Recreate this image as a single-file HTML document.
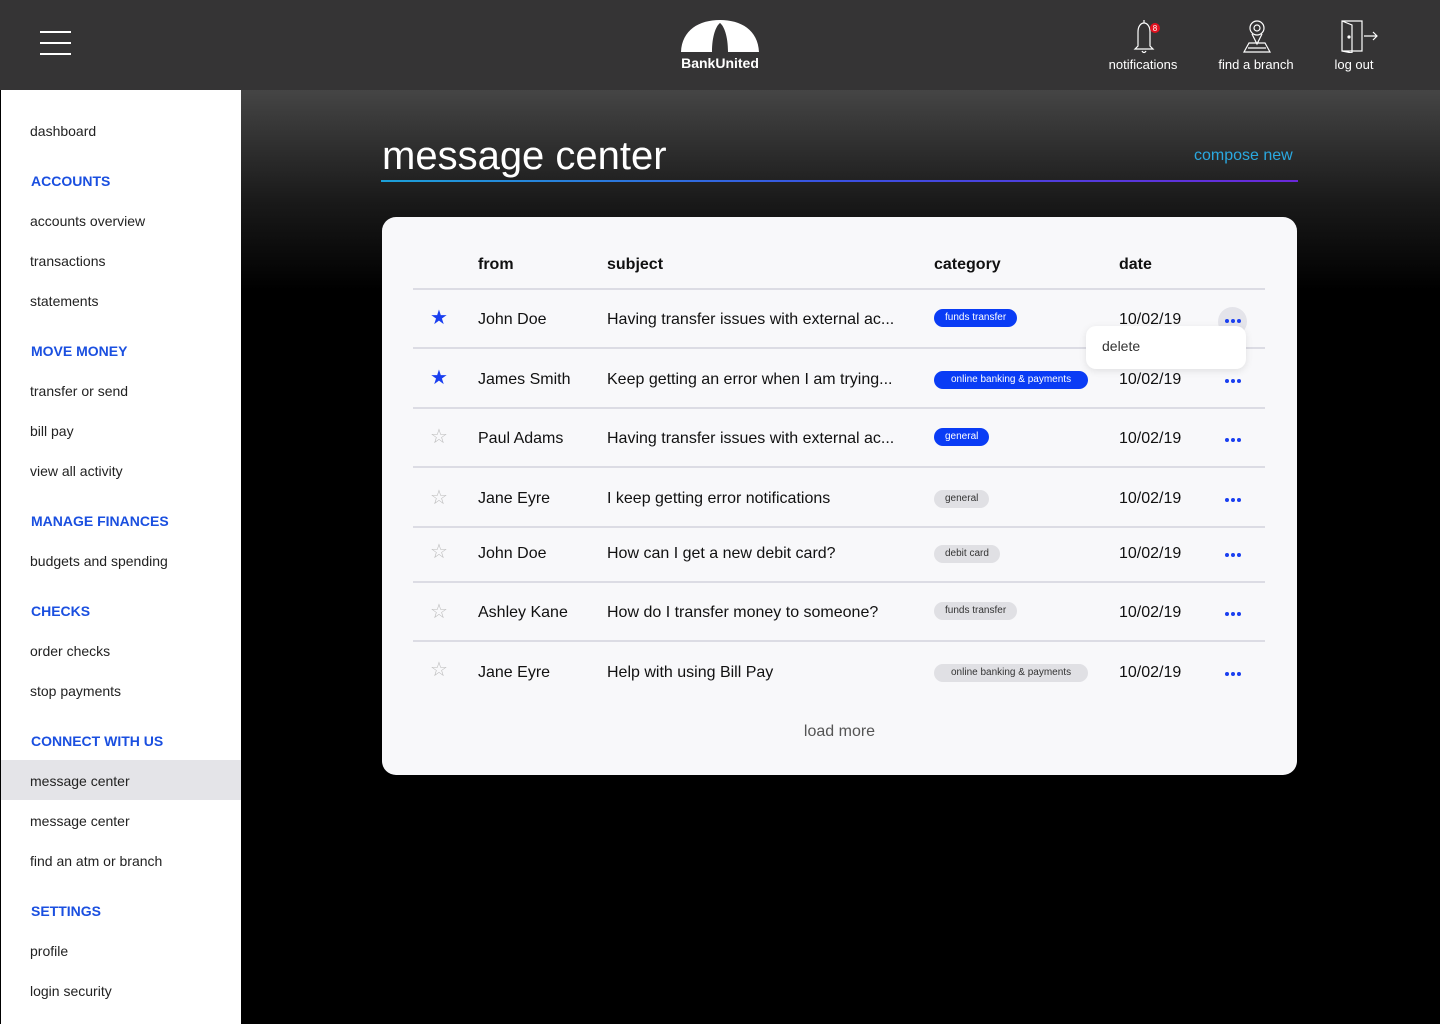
<!DOCTYPE html><html><head><style>
*{margin:0;padding:0;box-sizing:border-box}
body{width:1440px;height:1024px;overflow:hidden;font-family:"Liberation Sans",sans-serif;background:#000;position:relative}
.top{position:absolute;left:0;top:0;width:1440px;height:90px;background:#353435}
.main{position:absolute;left:241px;top:90px;width:1199px;height:934px;background:linear-gradient(#454545 0,#1a1a1a 110px,#000 200px)}
.side{position:absolute;left:1px;top:90px;width:240px;height:934px;background:#fff}
.side div{position:absolute;left:29px;font-size:14px;color:#222;line-height:20px}
.side .h{color:#1a4fe0;font-weight:bold;left:30px;font-size:14px}
.side .act{left:0;top:670px;width:240px;height:40px;background:#e4e4e8}
.t{position:absolute;color:#fff;font-size:13px;text-align:center}
.card{position:absolute;left:382px;top:217px;width:915px;height:558px;background:#f8f8fa;border-radius:14px}
.ln{position:absolute;left:31px;width:852px;height:2px;background:#dcdce4}
.c{position:absolute;font-size:16px;color:#111;line-height:20px}
.pill{position:absolute;left:552px;height:18px;border-radius:9px;font-size:10px;line-height:18px;padding:0 11px;color:#fff;background:#0a3cf5}
.pill.g{background:#e0e0e4;color:#333}
.dots{position:absolute;left:842px;width:18px;height:6px}
.star{position:absolute;left:48px;font-size:20px;line-height:20px}
</style></head><body>
<div class="top"></div>
<div style="position:absolute;left:40px;top:31px;width:31px;height:2px;background:#fff"></div>
<div style="position:absolute;left:40px;top:42px;width:31px;height:2px;background:#fff"></div>
<div style="position:absolute;left:40px;top:53px;width:31px;height:2px;background:#fff"></div>
<svg style="position:absolute;left:681px;top:20px" width="78" height="32" viewBox="0 0 78 32"><path fill-rule="evenodd" d="M0 32 C1 10 18 0 39 0 C60 0 77 10 78 32 Z M31 32 C31 16 35 6 39 3 C43 6 47 16 47 32 Z" fill="#fff"/></svg>
<div class="t" style="left:670px;top:55px;width:100px;font-weight:bold;font-size:14px">BankUnited</div>
<svg style="position:absolute;left:1128px;top:18px" width="34" height="36" viewBox="0 0 34 36" fill="none" stroke="#fff" stroke-width="1.2"><path d="M10 28 L10 14 C10 8 13 5 16 5 C19 5 22 8 22 14 L22 28 L25 31 L7 31 Z M14 33 C15 35 17 35 18 33 M16 5 L16 2"/><circle cx="27" cy="10" r="5" fill="#e0101e" stroke="none"/><text x="27" y="13" font-size="8" fill="#fff" stroke="none" text-anchor="middle" font-family="Liberation Sans">8</text></svg>
<div class="t" style="left:1098px;top:57px;width:90px">notifications</div>
<svg style="position:absolute;left:1240px;top:19px" width="34" height="34" viewBox="0 0 34 34" fill="none" stroke="#fff" stroke-width="1.2"><circle cx="17" cy="9" r="7"/><circle cx="17" cy="9" r="3"/><path d="M12 15 L17 25 L22 15 M4 33 L9 24 L25 24 L30 33 Z M8 29 L26 29"/></svg>
<div class="t" style="left:1211px;top:57px;width:90px">find a branch</div>
<svg style="position:absolute;left:1340px;top:19px" width="40" height="34" viewBox="0 0 40 34" fill="none" stroke="#fff" stroke-width="1.2"><path d="M2 2 L22 2 L22 32 L2 32 Z M2 2 L12 6 L12 34 L2 32 M24 17 L37 17 M33 13 L37 17 L33 21"/><circle cx="9" cy="18" r="1" fill="#fff"/></svg>
<div class="t" style="left:1314px;top:57px;width:80px">log out</div>
<div class="main"></div>
<div class="side"><div class="act"></div>
<div style="top:31px">dashboard</div><div class="h" style="top:81px">ACCOUNTS</div>
<div style="top:121px">accounts overview</div><div style="top:161px">transactions</div><div style="top:201px">statements</div>
<div class="h" style="top:251px">MOVE MONEY</div><div style="top:291px">transfer or send</div><div style="top:331px">bill pay</div><div style="top:371px">view all activity</div>
<div class="h" style="top:421px">MANAGE FINANCES</div><div style="top:461px">budgets and spending</div>
<div class="h" style="top:511px">CHECKS</div><div style="top:551px">order checks</div><div style="top:591px">stop payments</div>
<div class="h" style="top:641px">CONNECT WITH US</div><div style="top:681px">message center</div><div style="top:721px">message center</div><div style="top:761px">find an atm or branch</div>
<div class="h" style="top:811px">SETTINGS</div><div style="top:851px">profile</div><div style="top:891px">login security</div></div>
<div style="position:absolute;left:382px;top:132px;color:#fff;font-size:40px;line-height:48px">message center</div>
<div style="position:absolute;left:1194px;top:147px;color:#2aa8e0;font-size:16px">compose new</div>
<div style="position:absolute;left:381px;top:180px;width:917px;height:2px;background:linear-gradient(90deg,#1ca0d8,#3a50e0,#6a28d8)"></div>
<div class="card">
<div class="c" style="left:96px;top:38px;font-weight:bold">from</div><div class="c" style="left:225px;top:38px;font-weight:bold">subject</div><div class="c" style="left:552px;top:38px;font-weight:bold">category</div><div class="c" style="left:737px;top:38px;font-weight:bold">date</div>
<div class="ln" style="top:71px"></div>
<div class="star" style="top:91px;color:#1a3ff0">★</div><div class="c" style="left:96px;top:93px">John Doe</div><div class="c" style="left:225px;top:93px">Having transfer issues with external ac...</div><div class="pill" style="top:92px">funds transfer</div><div class="c" style="left:737px;top:93px">10/02/19</div>
<div style="position:absolute;left:836px;top:90px;width:29px;height:29px;border-radius:50%;background:#e4e4ea"></div>
<svg class="dots" style="top:101px" viewBox="0 0 18 6"><g fill="#1a3ff0"><circle cx="3" cy="3" r="2"/><circle cx="9" cy="3" r="2"/><circle cx="15" cy="3" r="2"/></g></svg>
<div class="ln" style="top:130px"></div>
<div class="star" style="top:151px;color:#1a3ff0">★</div><div class="c" style="left:96px;top:153px">James Smith</div><div class="c" style="left:225px;top:153px">Keep getting an error when I am trying...</div><div class="pill" style="top:154px;padding:0 17px">online banking &amp; payments</div><div class="c" style="left:737px;top:153px">10/02/19</div>
<svg class="dots" style="top:161px" viewBox="0 0 18 6"><g fill="#1a3ff0"><circle cx="3" cy="3" r="2"/><circle cx="9" cy="3" r="2"/><circle cx="15" cy="3" r="2"/></g></svg>
<div class="ln" style="top:190px"></div>
<div class="star" style="top:210px;color:#bbb">☆</div><div class="c" style="left:96px;top:212px">Paul Adams</div><div class="c" style="left:225px;top:212px">Having transfer issues with external ac...</div><div class="pill" style="top:211px">general</div><div class="c" style="left:737px;top:212px">10/02/19</div>
<svg class="dots" style="top:220px" viewBox="0 0 18 6"><g fill="#1a3ff0"><circle cx="3" cy="3" r="2"/><circle cx="9" cy="3" r="2"/><circle cx="15" cy="3" r="2"/></g></svg>
<div class="ln" style="top:249px"></div>
<div class="star" style="top:271px;color:#bbb">☆</div><div class="c" style="left:96px;top:272px">Jane Eyre</div><div class="c" style="left:225px;top:272px">I keep getting error notifications</div><div class="pill g" style="top:273px">general</div><div class="c" style="left:737px;top:272px">10/02/19</div>
<svg class="dots" style="top:280px" viewBox="0 0 18 6"><g fill="#1a3ff0"><circle cx="3" cy="3" r="2"/><circle cx="9" cy="3" r="2"/><circle cx="15" cy="3" r="2"/></g></svg>
<div class="ln" style="top:309px"></div>
<div class="star" style="top:325px;color:#bbb">☆</div><div class="c" style="left:96px;top:327px">John Doe</div><div class="c" style="left:225px;top:327px">How can I get a new debit card?</div><div class="pill g" style="top:328px">debit card</div><div class="c" style="left:737px;top:327px">10/02/19</div>
<svg class="dots" style="top:335px" viewBox="0 0 18 6"><g fill="#1a3ff0"><circle cx="3" cy="3" r="2"/><circle cx="9" cy="3" r="2"/><circle cx="15" cy="3" r="2"/></g></svg>
<div class="ln" style="top:364px"></div>
<div class="star" style="top:385px;color:#bbb">☆</div><div class="c" style="left:96px;top:386px">Ashley Kane</div><div class="c" style="left:225px;top:386px">How do I transfer money to someone?</div><div class="pill g" style="top:385px">funds transfer</div><div class="c" style="left:737px;top:386px">10/02/19</div>
<svg class="dots" style="top:394px" viewBox="0 0 18 6"><g fill="#1a3ff0"><circle cx="3" cy="3" r="2"/><circle cx="9" cy="3" r="2"/><circle cx="15" cy="3" r="2"/></g></svg>
<div class="ln" style="top:423px"></div>
<div class="star" style="top:443px;color:#bbb">☆</div><div class="c" style="left:96px;top:446px">Jane Eyre</div><div class="c" style="left:225px;top:446px">Help with using Bill Pay</div><div class="pill g" style="top:447px;padding:0 17px">online banking &amp; payments</div><div class="c" style="left:737px;top:446px">10/02/19</div>
<svg class="dots" style="top:454px" viewBox="0 0 18 6"><g fill="#1a3ff0"><circle cx="3" cy="3" r="2"/><circle cx="9" cy="3" r="2"/><circle cx="15" cy="3" r="2"/></g></svg>
<div class="c" style="left:0;width:915px;text-align:center;top:505px;color:#555">load more</div>
<div style="position:absolute;left:704px;top:109px;width:160px;height:43px;background:#fff;border-radius:10px;box-shadow:0 2px 8px rgba(0,0,0,.1);font-size:14px;color:#333;padding:12px 16px">delete</div>
</div>
</body></html>
